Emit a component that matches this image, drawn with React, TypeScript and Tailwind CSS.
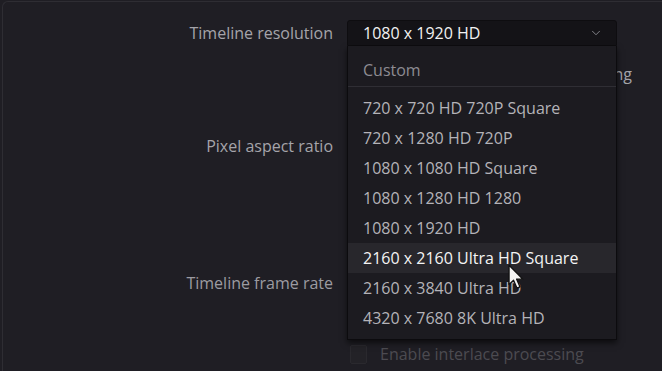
import { ChevronDown } from "lucide-react";

const options = [
  "720 x 720 HD 720P Square",
  "720 x 1280 HD 720P",
  "1080 x 1080 HD Square",
  "1080 x 1280 HD 1280",
  "1080 x 1920 HD",
  "2160 x 2160 Ultra HD Square",
  "2160 x 3840 Ultra HD",
  "4320 x 7680 8K Ultra HD",
];

const hovered = "2160 x 2160 Ultra HD Square";

const Cursor = () => (
  <svg width="16" height="26" viewBox="0 0 15 24" className="absolute left-[160px] top-[21px] z-20">
    <path
      d="M1 1 L1 19 L5.2 15 L8.4 22.4 L11.2 21.2 L8.1 14 L13.8 14 Z"
      fill="#f4f4f4"
      stroke="#111"
      strokeWidth="1.2"
      strokeLinejoin="round"
    />
  </svg>
);

const ResolutionSelect = () => (
  <div className="relative w-[270px] h-[26px]">
    <div className="flex items-center justify-between h-full pl-[15px] pr-[13px] bg-[#141317] border border-[#0e0d10] rounded-t-[3px] text-[#f2f2f2]">
      <span>1080 x 1920 HD</span>
      <ChevronDown className="w-[14px] h-[14px] text-[#8a8a90]" strokeWidth={1.6} />
    </div>
    <div className="absolute left-0 top-full w-[270px] bg-[#1c1b20] border border-t-0 border-[#0c0b0e] shadow-[0_3px_6px_rgba(0,0,0,0.6)] pt-[9px] pb-[6px]">
      <div className="h-[30px] flex items-center pl-[15px] text-[#8d8c92]">Custom</div>
      <div className="h-px bg-[#2f2e34] mt-px mb-[6px]" />
      {options.map((opt) => (
        <div
          key={opt}
          className={
            opt === hovered
              ? "relative h-[30px] flex items-center pl-[15px] bg-[#28272c] text-[#f4f4f4]"
              : "h-[30px] flex items-center pl-[15px] text-[#b4b3b8]"
          }
        >
          {opt}
          {opt === hovered && <Cursor />}
        </div>
      ))}
    </div>
  </div>
);

export default function App() {
  return (
    <div
      className="w-[662px] h-[371px] overflow-hidden bg-[#1f1e24] text-[16px] leading-none"
      style={{ fontFamily: '"Open Sans", "Noto Sans", sans-serif' }}
    >
      <div className="ml-[2px] mt-px h-[400px] border-l border-t border-[#2e2d33] rounded-tl-[6px] pt-[18px]">
        <div className="grid grid-cols-[330px_270px] gap-x-[14px] items-center">
          <div className="text-right text-[#a5a4aa]">Timeline resolution</div>
          <div className="relative z-10">
            <ResolutionSelect />
          </div>
        </div>

        <div className="grid grid-cols-[330px_285px] gap-x-[14px] items-center h-[24px] mt-[16px]">
          <div />
          <div className="text-right text-[#a5a4aa]">for 1080 x 1920 processing</div>
        </div>

        <div className="grid grid-cols-[330px_270px] gap-x-[14px] items-center h-[24px] mt-[48px]">
          <div className="text-right text-[#a5a4aa]">Pixel aspect ratio</div>
          <div />
        </div>

        <div className="grid grid-cols-[330px_270px] gap-x-[14px] items-center h-[24px] mt-[113px]">
          <div className="text-right text-[#9c9ba1]">Timeline frame rate</div>
          <div />
        </div>

        <div className="grid grid-cols-[330px_270px] gap-x-[14px] items-center h-[20px] mt-[49px]">
          <div />
          <div className="flex items-center gap-[13px] pl-[3px]">
            <div className="w-[17px] h-[19px] bg-[#232227] border border-[#2a292e] rounded-[2px]" />
            <span className="text-[#4c4b51]">Enable interlace processing</span>
          </div>
        </div>
      </div>
    </div>
  );
}
